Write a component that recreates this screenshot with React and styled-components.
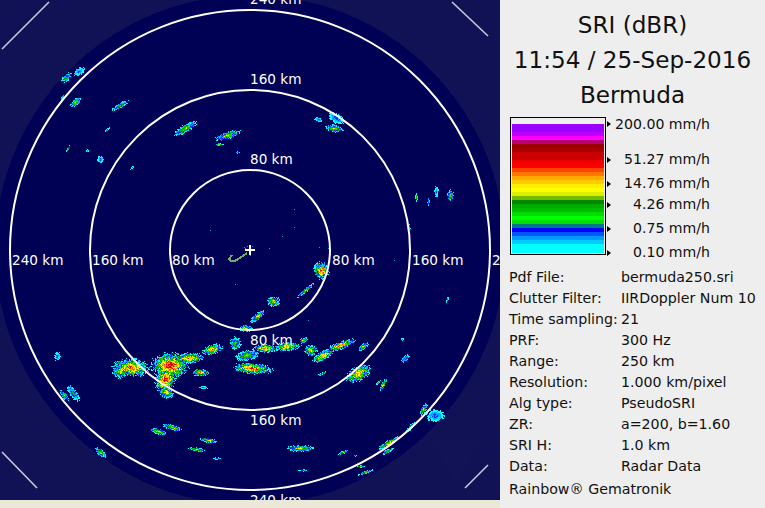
import React from 'react';
import styled, { createGlobalStyle } from 'styled-components';

const GlobalStyle = createGlobalStyle`
	html, body {
		margin: 0;
		padding: 0;
		background: #eeeeee;
		overflow: hidden;
	}
	body {
		font-family: "DejaVu Sans", sans-serif;
		color: #111111;
	}
`;

const Page = styled.div`
	display: flex;
	width: 765px;
	height: 508px;
	overflow: hidden;
`;

const ScopeColumn = styled.div`
	display: flex;
	flex-direction: column;
	width: 500px;
	background: #ece8d8;
`;

const Scope = styled.svg`
	display: block;
	width: 500px;
	height: 500px;
	background: #111155;
	flex: none;
`;

const RangeLabel = styled.text`
	fill: #ffffff;
	font-family: "DejaVu Sans", sans-serif;
	font-size: 13.6px;
`;

const Panel = styled.div`
	display: flex;
	flex-direction: column;
	width: 265px;
	background: #eeeeee;
`;

const Titles = styled.div`
	padding-top: 8px;
	text-align: center;
	font-size: 23.1px;
	line-height: 35px;
	color: #111111;
`;

const Legend = styled.div`
	display: flex;
	margin: 4px 0 0 10px;
`;

const ColorBox = styled.div`
	box-sizing: border-box;
	width: 96px;
	height: 138px;
	border: 1px solid #000000;
	padding: 6px 1px 0;
`;

const Band = styled.div`
	height: ${(p) => p.$size}px;
	background: ${(p) => p.$color};
`;

const Scale = styled.div`
	display: flex;
	flex-direction: column;
`;

const ScaleRow = styled.div`
	display: flex;
	align-items: center;
	height: 14px;
	margin-top: ${(p) => p.$gap}px;
	margin-left: 1px;
`;

const Tick = styled.span`
	width: 0;
	height: 0;
	margin-top: ${(p) => p.$drop}px;
	border-left: 4px solid #000000;
	border-top: 3px solid transparent;
	border-bottom: 3px solid transparent;
`;

const ScaleText = styled.span`
	width: 99px;
	text-align: right;
	font-size: 14.1px;
	white-space: nowrap;
`;

const Details = styled.div`
	display: grid;
	grid-template-columns: 112px 1fr;
	grid-auto-rows: 21px;
	align-items: center;
	margin: 7px 0 0 9px;
	font-size: 14.2px;
	white-space: nowrap;
`;

const Footer = styled.div`
	margin: 3px 0 0 9px;
	font-size: 14.2px;
	line-height: 21px;
	white-space: nowrap;
`;

const BANDS = [
	['#9900ff', 8], ['#bb00ff', 4], ['#ff00ff', 4], ['#bb0077', 4],
	['#990000', 4], ['#aa0000', 4], ['#cc0000', 8], ['#ee0000', 4], ['#ff0000', 4],
	['#ff4400', 4], ['#ff7700', 4], ['#ffaa00', 4], ['#ffcc00', 4], ['#ffee00', 4],
	['#ffff00', 4], ['#ddee00', 4], ['#77bb00', 4], ['#008800', 4], ['#00aa00', 4],
	['#00bb00', 4], ['#00dd00', 4], ['#00ff00', 4], ['#00dd00', 4], ['#007788', 4],
	['#0000ff', 4], ['#0055ff', 4], ['#0099ff', 4], ['#00ccff', 4], ['#00ffff', 9],
];

const SCALE = [
	['200.00 mm/h', 0, 0],
	['51.27 mm/h', 21, 2],
	['14.76 mm/h', 10, 2],
	['4.26 mm/h', 7, 2],
	['0.75 mm/h', 10, 2],
	['0.10 mm/h', 10, 2],
];

const DETAILS = [
	['Pdf File:', 'bermuda250.sri'],
	['Clutter Filter:', 'IIRDoppler Num 10'],
	['Time sampling:', '21'],
	['PRF:', '300 Hz'],
	['Range:', '250 km'],
	['Resolution:', '1.000 km/pixel'],
	['Alg type:', 'PseudoSRI'],
	['ZR:', 'a=200, b=1.60'],
	['SRI H:', '1.0 km'],
	['Data:', 'Radar Data'],
];

const LABELS = [
	['240 km', 250, 4], ['160 km', 250, 84], ['80 km', 250, 164],
	['240 km', 12, 265], ['160 km', 92, 265], ['80 km', 172, 265],
	['80 km', 332, 265], ['160 km', 412, 265], ['240 km', 492, 265],
	['80 km', 250, 345], ['160 km', 250, 425], ['240 km', 250, 505],
];

// cx, cy, rx, ry, angle, peak
const CELLS = [
	[131, 367, 17, 8, 5, 4.2], [120, 371, 7, 6, 0, 3], [170, 365, 17, 12, 0, 4.6], [165, 379, 9, 12, 20, 4.4],
	[188, 358, 15, 5, -5, 3.6], [166, 392, 7, 5, 30, 3], [200, 372, 8, 3.4, 0, 3.4], [212, 349, 9, 4.6, -15, 3.8],
	[203, 387, 4, 1.2, 5, 1], [57, 356, 3, 4, 0, 1], [73, 393, 9, 3.4, 55, 1.6], [64, 395, 6, 2.4, 50, 2.4],
	[172, 427, 9, 2.6, 15, 2.8], [158, 431, 8, 2.6, 15, 2.8], [208, 440, 8, 2.2, 10, 2.8], [196, 449, 8, 1.8, 10, 2.8],
	[217, 458, 4, 1, 0, 1], [100, 452, 6, 3, 45, 2.4], [247, 355, 11, 5, -10, 2.4], [252, 368, 18, 5, 5, 4.4],
	[235, 343, 5, 6, 0, 2], [321, 270, 7, 8, 0, 4], [305, 290, 10, 1.7, -40, 2.8], [273, 301, 6, 5, 0, 2.8],
	[257, 316, 8, 3, -40, 2.8], [245, 328, 6, 3.4, 0, 2.8], [265, 348, 11, 4, 0, 3.8], [287, 346, 12, 4, -5, 3.6],
	[303, 340, 4, 2.4, -30, 2.8], [310, 350, 6, 5, 0, 3], [323, 355, 11, 4, -30, 3.8], [340, 345, 14, 3.6, -20, 3.8],
	[363, 346, 6, 2.4, -40, 2.8], [322, 373, 4.5, 1.2, -25, 2], [358, 373, 12, 7, -30, 3.6], [383, 384, 7, 1.8, -60, 2.8],
	[405, 358, 5, 2.4, -45, 2], [447, 299, 3, 1, -70, 1], [402, 339, 1.4, 1.4, 0, 1],
	[66, 77, 6, 3, -45, 1.6], [79, 71, 6, 3.4, -30, 1], [75, 102, 6, 3, -40, 2.6], [62, 97, 3, 1, -60, 2],
	[120, 105, 9, 2.4, -30, 1.8], [107, 129, 2.5, 1, -40, 1], [68, 148, 4, 1, -60, 1.6], [87, 150, 1.4, 1.4, 0, 1],
	[100, 159, 3, 3.4, 0, 1], [132, 167, 2.5, 1, -45, 1], [185, 128, 12, 3.4, -30, 2.6], [227, 135, 12, 3.4, -20, 2.8],
	[219, 144, 4, 1.2, 0, 2.8], [237, 152, 2, 1, 0, 1.6], [318, 119, 4, 2, 20, 1], [336, 118, 8, 4.4, 30, 1.2],
	[334, 128, 8, 3.4, 10, 2.6], [416, 197, 1.2, 4, 0, 1.6], [428, 201, 1.2, 4, 0, 1.6], [436, 191, 2, 5, 0, 1],
	[450, 195, 3, 5, 0, 2.4], [409, 227, 1, 3, 0, 1.6], [423, 409, 6, 2.4, -60, 2.8], [435, 415, 8, 6, 0, 1.1],
	[410, 427, 6, 1.8, -50, 2], [388, 443, 11, 2.8, -30, 2.8], [387, 451, 6, 1.8, -30, 2], [343, 452, 5, 1.6, -20, 2.8],
	[355, 455, 2, 1, 0, 1], [365, 472, 7, 1.2, -20, 2.4], [360, 466, 4, 1, 0, 2], [300, 448, 12, 3, 0, 2.8],
	[302, 470, 4, 1, 0, 1], [378, 382, 3, 1, -50, 1],
];

const DOTS = [
	[294, 209], [294, 227], [282, 236], [269, 248], [319, 247], [210, 230], [328, 248], [394, 260], [235, 284], [308, 320],
	[244, 247], [245, 248], [247, 246], [252, 246], [249, 254], [250, 255],
];

const LEVELS = ['#00ffff', '#00aaff', '#0033ff', '#00aa00', '#00cc00', '#66cc00', '#ffff00', '#ffdd00', '#ffaa00', '#ff5500', '#dd0000'];

const hash = (x, y) => {
	const s = Math.sin(x * 127.1 + y * 311.7) * 43758.5453;
	return s - Math.floor(s);
};

// every cell is an ellipse with a noisy edge, values go up to its peak
const buildEchoes = () => {
	const field = new Map();
	CELLS.forEach(([cx, cy, rx, ry, angle, peak]) => {
		const a = (angle * Math.PI) / 180;
		const reach = Math.ceil(Math.max(rx, ry) * 1.4) + 1;
		for (let y = Math.floor(cy) - reach; y <= cy + reach; y++) {
			for (let x = Math.floor(cx) - reach; x <= cx + reach; x++) {
				const dx = x - cx;
				const dy = y - cy;
				const u = (dx * Math.cos(a) + dy * Math.sin(a)) / rx;
				const v = (-dx * Math.sin(a) + dy * Math.cos(a)) / ry;
				const d = Math.sqrt(u * u + v * v) + (hash(x, y) - 0.5) * 0.45;
				if (d < 1) {
					const value = (1 - d) * peak * 2.6;
					const key = `${x},${y}`;
					field.set(key, Math.max(field.get(key) || 0, value));
				}
			}
		}
	});
	const paths = LEVELS.map(() => '');
	field.forEach((value, key) => {
		const [x, y] = key.split(',');
		const i = Math.min(Math.floor(value), LEVELS.length - 1);
		paths[i] += `M${x} ${y}h1v1h-1z`;
	});
	DOTS.forEach(([x, y]) => {
		paths[1] += `M${x} ${y}h1v1h-1z`;
	});
	return paths;
};

const ECHOES = buildEchoes();

const App = () => {
	return (
		<Page>
			<GlobalStyle />
			<ScopeColumn>
				<Scope viewBox="0 0 500 500">
					<circle cx="250" cy="250" r="255" fill="#000055" shapeRendering="crispEdges" />
					<polygon points="430,438 482,438 456,484" fill="#121257" />
					{ECHOES.map((d, i) => (
						<path key={i} d={d} fill={LEVELS[i]} shapeRendering="crispEdges" />
					))}
					<path
						d="M232 255l-3 4 2 2h4l8-5 4-3"
						fill="none"
						stroke="#6fae6f"
						strokeWidth="2"
						shapeRendering="crispEdges"
					/>
					{[80, 160, 240].map((r) => (
						<circle key={r} cx="250" cy="250" r={r} fill="none" stroke="#ffffff" strokeWidth="2" />
					))}
					<path d="M250 245v10M245 250h10" stroke="#ffffff" strokeWidth="2" />
					<g stroke="#c9c9d9" strokeWidth="1.6">
						<line x1="2" y1="49" x2="49" y2="2" />
						<line x1="452" y1="2" x2="488" y2="36" />
						<line x1="2" y1="452" x2="37" y2="488" />
						<line x1="465" y1="488" x2="488" y2="465" />
					</g>
					{LABELS.map(([text, x, y]) => (
						<RangeLabel key={`${x}-${y}`} x={x} y={y}>
							{text}
						</RangeLabel>
					))}
				</Scope>
			</ScopeColumn>
			<Panel>
				<Titles>
					<div>SRI (dBR)</div>
					<div>11:54 / 25-Sep-2016</div>
					<div>Bermuda</div>
				</Titles>
				<Legend>
					<ColorBox>
						{BANDS.map(([color, size], i) => (
							<Band key={i} $color={color} $size={size} />
						))}
					</ColorBox>
					<Scale>
						{SCALE.map(([text, gap, drop]) => (
							<ScaleRow key={text} $gap={gap}>
								<Tick $drop={drop} />
								<ScaleText>{text}</ScaleText>
							</ScaleRow>
						))}
					</Scale>
				</Legend>
				<Details>
					{DETAILS.map(([name, value]) => (
						<React.Fragment key={name}>
							<span>{name}</span>
							<span>{value}</span>
						</React.Fragment>
					))}
				</Details>
				<Footer>Rainbow® Gematronik</Footer>
			</Panel>
		</Page>
	);
};

export default App;
